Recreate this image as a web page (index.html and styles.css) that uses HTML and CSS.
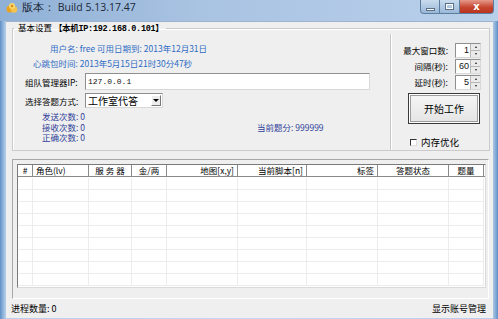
FILE: index.html
```html
<!DOCTYPE html>
<html>
<head>
<meta charset="utf-8">
<link rel="stylesheet" href="styles.css">
</head>
<body>
<div class="window">
  <div class="titlebar">
    <svg class="app-icon" width="12" height="12" viewBox="0 0 12 12">
      <circle cx="4" cy="7" r="3.5" fill="#e8a21c"/>
      <circle cx="8" cy="7.5" r="3.3" fill="#f3c24a"/>
      <circle cx="6" cy="4" r="3" fill="#f7d66a"/>
      <circle cx="6" cy="4" r="1.2" fill="#d9891a"/>
    </svg>
    <span class="title">版本： Build 5.13.17.47</span>
    <div class="caption-btns">
      <div class="cap cap-min"><span class="bar"></span></div>
      <div class="cap cap-max"><span class="box"></span></div>
      <div class="cap cap-close">x</div>
    </div>
  </div>
  <div class="client">
    <fieldset class="group">
      <legend>基本设置 <span class="ip">【本机IP:192.168.0.101】</span></legend>
      <div class="group-body">
        <div class="left">
          <div class="info info1">用户名: free 可用日期到: 2013年12月31日</div>
          <div class="info info2">心跳包时间: 2013年5月15日21时30分47秒</div>
          <div class="field-row row-ip">
            <span class="lbl">组队管理器IP:</span>
            <div class="textbox">127.0.0.1</div>
          </div>
          <div class="field-row row-mode">
            <span class="lbl">选择答题方式:</span>
            <div class="combo"><span class="combo-text">工作室代答</span><span class="drop"><i></i></span></div>
          </div>
          <div class="counts">
            <div class="cnt">发送次数: 0</div>
            <div class="cnt cnt-mid"><span>接收次数: 0</span><span class="score">当前题分: 999999</span></div>
            <div class="cnt">正确次数: 0</div>
          </div>
        </div>
        <div class="right">
          <div class="spin-row"><span class="spin-lbl">最大窗口数:</span><div class="spin"><span class="spin-val">1</span><span class="arrows"><i class="up"></i><i class="dn"></i></span></div></div>
          <div class="spin-row"><span class="spin-lbl">间隔(秒):</span><div class="spin"><span class="spin-val">60</span><span class="arrows"><i class="up"></i><i class="dn"></i></span></div></div>
          <div class="spin-row"><span class="spin-lbl">延时(秒):</span><div class="spin"><span class="spin-val">5</span><span class="arrows"><i class="up"></i><i class="dn"></i></span></div></div>
          <div class="start-btn"><span>开始工作</span></div>
          <div class="check-row"><span class="checkbox"></span><span class="check-lbl">内存优化</span></div>
        </div>
      </div>
    </fieldset>
    <div class="list-panel">
      <div class="list">
        <div class="lhead">
          <div class="hc c-center">#</div>
          <div class="hc c-left">角色(lv)</div>
          <div class="hc c-center">服 务 器</div>
          <div class="hc c-center">金/两</div>
          <div class="hc c-right">地图[x,y]</div>
          <div class="hc c-right">当前脚本[n]</div>
          <div class="hc c-right">标签</div>
          <div class="hc c-center">答题状态</div>
          <div class="hc c-center">题量</div>
        </div>
        <div class="lbody">
          <div class="lrow"><i></i><i></i><i></i><i></i><i></i><i></i><i></i><i></i><i></i></div>
          <div class="lrow"><i></i><i></i><i></i><i></i><i></i><i></i><i></i><i></i><i></i></div>
          <div class="lrow"><i></i><i></i><i></i><i></i><i></i><i></i><i></i><i></i><i></i></div>
          <div class="lrow"><i></i><i></i><i></i><i></i><i></i><i></i><i></i><i></i><i></i></div>
          <div class="lrow"><i></i><i></i><i></i><i></i><i></i><i></i><i></i><i></i><i></i></div>
          <div class="lrow"><i></i><i></i><i></i><i></i><i></i><i></i><i></i><i></i><i></i></div>
          <div class="lrow"><i></i><i></i><i></i><i></i><i></i><i></i><i></i><i></i><i></i></div>
          <div class="lrow"><i></i><i></i><i></i><i></i><i></i><i></i><i></i><i></i><i></i></div>
          <div class="lrow"><i></i><i></i><i></i><i></i><i></i><i></i><i></i><i></i><i></i></div>
        </div>
      </div>
    </div>
    <div class="statusbar">
      <span>进程数量: 0</span>
      <span>显示账号管理</span>
    </div>
  </div>
</div>
</body>
</html>
```

FILE: styles.css
```css
* { box-sizing: border-box; }
html, body { margin: 0; padding: 0; }
body {
  width: 498px;
  height: 319px;
  overflow: hidden;
  font-family: "Noto Sans CJK SC", "Liberation Sans", sans-serif;
  font-size: 8.5px;
  color: #111;
}
.window {
  width: 498px;
  height: 319px;
  display: flex;
  flex-direction: column;
  background: linear-gradient(90deg, #5f8fc4 0, #8fb3da 3px, #b7cfe8 6px, #c4d8ee 50%, #b7cfe8 calc(100% - 6px), #8fb3da calc(100% - 3px), #5f8fc4 100%);
}
.titlebar {
  height: 21px;
  flex: none;
  display: flex;
  align-items: flex-start;
  background: linear-gradient(90deg, #8fb0d6 0, #a9c3e2 40%, #b9d0ea 100%);
  padding-left: 6px;
}
.app-icon { margin-top: 2px; flex: none; }
.title {
  margin-left: 4px;
  margin-top: 1px;
  font-family: "Open Sans", "DejaVu Sans", sans-serif;
  font-size: 10.5px;
  line-height: 13px;
  color: #1c2836;
}
.caption-btns {
  margin-left: auto;
  margin-right: 4px;
  display: flex;
  height: 14px;
}
.cap {
  height: 14px;
  border: 1px solid #5d7d9f;
  border-top: none;
  display: flex;
  align-items: center;
  justify-content: center;
}
.cap-min {
  width: 20px;
  border-radius: 0 0 0 4px;
  background: linear-gradient(180deg, #c9dbee, #9ab8d8);
}
.cap-max {
  width: 20px;
  border-left: none;
  background: linear-gradient(180deg, #c9dbee, #9ab8d8);
}
.cap-close {
  width: 34px;
  border-left: none;
  border-radius: 0 0 4px 0;
  background: linear-gradient(180deg, #e59a8c, #c7462f 55%, #b8341f);
  color: #fff;
  font-family: "DejaVu Sans", sans-serif;
  font-weight: bold;
  font-size: 10px;
  line-height: 12px;
}
.cap-min .bar {
  width: 9px;
  height: 3px;
  margin-top: 5px;
  background: #fff;
  border: 1px solid #5a6f88;
}
.cap-max .box {
  width: 9px;
  height: 7px;
  border: 1px solid #5a6f88;
  box-shadow: inset 0 0 0 1px #fff;
}
.client {
  flex: 1;
  margin: 0 5px 1px 6px;
  background: #efefef;
  border-top: 1px solid #9fb4cc;
  display: flex;
  flex-direction: column;
  padding: 0 3px 0 6px;
}
.group {
  margin: 0;
  padding: 0;
  border: 1px solid #cbcbcb;
  box-shadow: inset 1px 1px 0 #fff;
  height: 129px;
  min-width: 0;
}
.group legend {
  padding: 0 2px 0 4px;
  margin-left: 1px;
  font-size: 8.5px;
  line-height: 10px;
  color: #000;
}
.group legend .ip { font-family: "Liberation Mono", "Noto Sans CJK SC", monospace; font-weight: bold; letter-spacing: -0.3px; }
.group-body {
  display: flex;
  height: 117px;
}
.left {
  width: 377px;
  display: flex;
  flex-direction: column;
}
.info {
  line-height: 10px;
  height: 10px;
  color: #2e6cc4;
}
.info1 { margin-top: 9px; padding-left: 37px; }
.info2 { margin-top: 5px; padding-left: 20px; }
.field-row {
  display: flex;
  align-items: center;
  padding-left: 12px;
}
.field-row .lbl { width: 60px; color: #000; }
.row-ip { margin-top: 5px; height: 17px; }
.row-mode { margin-top: 3px; height: 15px; }
.textbox {
  width: 285px;
  height: 17px;
  background: #fff;
  border: 1px solid #8f8f8f;
  border-right-color: #d8d8d8;
  border-bottom-color: #d8d8d8;
  font-family: "Liberation Mono", monospace;
  font-size: 8px;
  line-height: 15px;
  padding-left: 2px;
}
.combo {
  width: 78px;
  height: 15px;
  background: #fff;
  border: 1px solid #8f8f8f;
  border-right-color: #d8d8d8;
  border-bottom-color: #d8d8d8;
  display: flex;
  align-items: center;
  justify-content: space-between;
  padding: 0 1px 0 2px;
}
.combo-text { font-size: 10px; line-height: 12px; color: #000; }
.drop {
  width: 10px;
  height: 11px;
  background: #ececec;
  border: 1px solid #fff;
  border-right-color: #777;
  border-bottom-color: #777;
  display: flex;
  align-items: center;
  justify-content: center;
}
.drop i {
  width: 0; height: 0;
  border-left: 3px solid transparent;
  border-right: 3px solid transparent;
  border-top: 3px solid #000;
}
.counts {
  margin-top: 3px;
  padding-left: 29px;
  color: #2f3f98;
}
.cnt { height: 10.5px; line-height: 10.5px; }
.cnt-mid { display: flex; }
.score { margin-left: 172px; }
.right {
  flex: 1;
  border-left: 1px solid #c8c8c8;
  box-shadow: inset 1px 0 0 #fff;
  display: flex;
  flex-direction: column;
  padding-top: 8px;
  height: 116px;
}
.spin-row {
  height: 16px;
  display: flex;
  align-items: center;
  justify-content: flex-end;
  padding-right: 8px;
}
.spin-lbl { color: #000; margin-right: 7px; }
.spin {
  width: 26px;
  height: 15px;
  display: flex;
  background: #fff;
  border: 1px solid #8f8f8f;
  border-right-color: #d8d8d8;
  border-bottom-color: #d8d8d8;
}
.spin-val {
  flex: 1;
  text-align: right;
  font-family: "Liberation Sans", sans-serif;
  font-size: 9px;
  line-height: 13px;
  padding-right: 1px;
}
.arrows {
  width: 10px;
  display: flex;
  flex-direction: column;
  background: #eaeaea;
  border-left: 1px solid #b8b8b8;
}
.arrows i {
  flex: 1;
  display: flex;
  align-items: center;
  justify-content: center;
  border-bottom: 1px solid #b8b8b8;
}
.arrows i:last-child { border-bottom: none; }
.arrows i::after {
  content: "";
  width: 0; height: 0;
  border-left: 1.5px solid transparent;
  border-right: 1.5px solid transparent;
}
.arrows .up::after { border-bottom: 2px solid #222; }
.arrows .dn::after { border-top: 2px solid #222; }
.start-btn {
  margin: 3px 0 0 17px;
  width: 72px;
  height: 31px;
  border: 1px solid #3a3a3a;
  background: linear-gradient(180deg, #f6f6f6, #e4e4e4);
  box-shadow: inset 0 0 0 1px #fff, inset 0 0 0 2px #9c9c9c;
  display: flex;
  align-items: center;
  justify-content: center;
  font-size: 10px;
  color: #000;
}
.check-row {
  margin: 14px 0 0 19px;
  display: flex;
  align-items: center;
  height: 8px;
}
.checkbox {
  width: 7px;
  height: 7px;
  border-left: 1px solid #333;
  border-top: 1px solid #333;
  background: #fff;
  border-right: 1px solid #ddd;
  border-bottom: 1px solid #ddd;
}
.check-lbl { margin-left: 4px; font-size: 9.5px; color: #000; }
.list-panel {
  margin-top: 8px;
  width: 477px;
  height: 140px;
  border: 1px solid #a8a8a8;
  border-right-color: #fff;
  border-bottom-color: #fff;
  padding: 4px 0 0 4px;
}
.list {
  width: 469px;
  height: 124px;
  background: #fff;
  border: 1px solid #7a7a7a;
  border-right-color: #dadada;
  border-bottom-color: #dadada;
  overflow: hidden;
}
.lhead, .lrow {
  display: grid;
  grid-template-columns: 15px 56px 43px 35px 71px 69px 71px 71px 35px;
}
.lhead {
  height: 12px;
  border-bottom: 1px solid #8a8a8a;
}
.hc {
  font-size: 8.5px;
  line-height: 11px;
  color: #000;
  border-right: 1px solid #8a8a8a;
  padding: 0 3px;
  white-space: nowrap;
  overflow: hidden;
}
.c-center { text-align: center; }
.c-left { text-align: left; }
.c-right { text-align: right; }
.lbody { padding-top: 1px; }
.lrow { height: 12px; }
.lrow i {
  border-right: 1px solid #ececec;
  border-bottom: 1px solid #ececec;
}
.statusbar {
  flex: 1;
  display: flex;
  justify-content: space-between;
  align-items: center;
  padding: 0 4px 0 0;
  margin-left: -1px;
  font-size: 9px;
  color: #000;
}
```
